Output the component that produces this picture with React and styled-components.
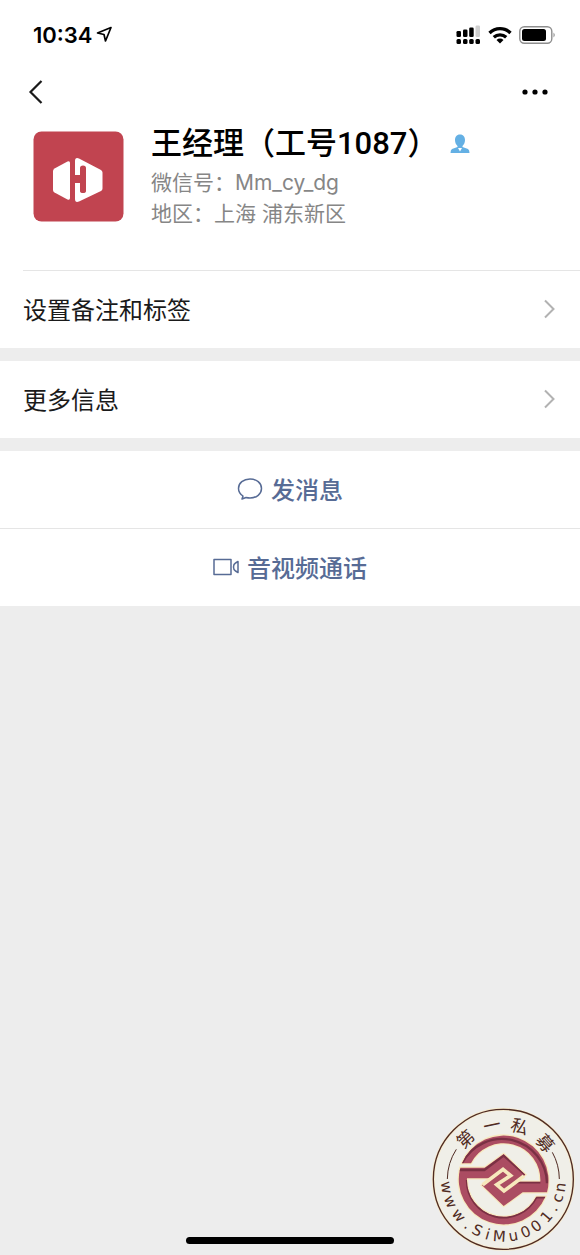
import React from 'react';
import styled, { createGlobalStyle } from 'styled-components';

const GlobalStyle = createGlobalStyle`
  * {
    box-sizing: border-box;
  }
  body {
    margin: 0;
    background: #ededed;
    font-family: Inter, "Noto Sans CJK SC", sans-serif;
    color: #1a1a1a;
  }
  button {
    font-family: inherit;
    border: 0;
    padding: 0;
    background: none;
    color: inherit;
    cursor: pointer;
  }
  svg {
    display: block;
    flex: none;
  }
`;

const Screen = styled.div`
  position: relative;
  min-height: 100vh;
  display: flex;
  flex-direction: column;
`;

const Top = styled.header`
  background: #fff;
`;

const StatusBar = styled.div`
  display: flex;
  align-items: center;
  justify-content: space-between;
  height: 69px;
  padding: 0 24px 0 33px;
`;

const Clock = styled.div`
  display: flex;
  align-items: center;
  gap: 4px;
  font-size: 22px;
  font-weight: 600;
  color: #000;
`;

const Indicators = styled.div`
  display: flex;
  align-items: center;
  gap: 7px;
`;

const NavBar = styled.nav`
  display: flex;
  align-items: center;
  justify-content: space-between;
  height: 46px;
  padding: 0 32px 0 24px;
`;

const Profile = styled.section`
  display: flex;
  gap: 27px;
  height: 155px;
  padding: 9px 32px 0;
`;

const Avatar = styled.svg`
  margin-top: 6px;
`;

const Details = styled.div`
  flex: 1;
`;

const NameLine = styled.div`
  display: flex;
  align-items: center;
  gap: 12px;
  margin-bottom: 4px;
`;

const Name = styled.h1`
  margin: 0;
  font-family: Roboto, "Noto Sans CJK SC", sans-serif;
  font-size: 31px;
  line-height: 39px;
  font-weight: 500;
  color: #000;
`;

const Meta = styled.p`
  margin: 0;
  font-size: 21px;
  line-height: 31px;
  color: #868686;
`;

const Group = styled.div`
  background: #fff;
  margin-bottom: 13px;
`;

const Row = styled.button`
  display: flex;
  align-items: center;
  justify-content: space-between;
  width: 100%;
  height: 77px;
  padding: 0 24px 2px 23px;
  font-size: 24px;
  text-align: left;
`;

const Divider = styled.hr`
  height: 1px;
  margin: 0 0 0 ${(props) => props.$inset || 0}px;
  border: 0;
  background: #e5e5e5;
`;

const Action = styled.button`
  display: flex;
  align-items: center;
  justify-content: center;
  gap: 8px;
  width: 100%;
  height: 77px;
  padding-bottom: 2px;
  font-size: 24px;
  font-weight: 500;
  color: #576b95;
`;

const HomeBar = styled.div`
  width: 208px;
  height: 7px;
  margin: auto auto 11px;
  border-radius: 4px;
  background: #000;
`;

const Stamp = styled.svg`
  position: absolute;
  right: 0;
  bottom: 0;
`;

const Chevron = () => (
  <svg width="13" height="20" viewBox="0 0 13 20" fill="none" stroke="#b2b2b2" strokeWidth="2">
    <path d="M2 1.5 L10.5 10 L2 18.5" />
  </svg>
);

const urlChars = [
  ['w', 82], ['w', 67], ['w', 51], ['.', 38], ['S', 27], ['i', 16], ['M', 4],
  ['u', -10], ['0', -23], ['0', -35], ['1', -49], ['.', -60], ['c', -71], ['n', -82],
];

const titleChars = [['第', -43], ['一', -12], ['私', 17], ['募', 49]];

// one half of the emblem, the other half is the same shape turned by 180deg
const half = 'M111 190 A135 135 0 0 1 366 277 H293 L236 318 L171 256 L234 208 L255 226 L216 254 L237 272 L273 245 H346 A110 110 0 0 0 138 190 Z';

const EmblemHalf = () => (
  <>
    <path d={half} fill="#ab4c62" stroke="#f7e8bd" strokeWidth="7" />
    <path d={half} fill="#ab4c62" />
  </>
);

function SiteStamp() {
  return (
    <Stamp width="155" height="155" viewBox="0 0 465 465" role="img" aria-label="第一私募 www.SiMu001.cn">
      <defs>
        <clipPath id="emblem">
          <path d={half} />
          <path d={half} transform="rotate(180 236 240)" />
        </clipPath>
      </defs>
      <circle cx="235" cy="238" r="210" fill="#f0efe8" stroke="#f7ecd0" strokeWidth="9" />
      <circle cx="235" cy="238" r="210" fill="none" stroke="#4f2a22" strokeWidth="4" />
      <g fill="none" stroke="#4f2a22" strokeWidth="3">
        <path d="M67 237 A168 168 0 0 1 94 148" />
        <path d="M403 237 A168 168 0 0 0 382 157" />
      </g>
      <EmblemHalf />
      <g transform="rotate(180 236 240)">
        <EmblemHalf />
      </g>
      <g clipPath="url(#emblem)" fill="none" stroke="#7a3043" strokeWidth="7">
        <path d="M111 190 A135 135 0 0 1 366 250" />
        <path d="M102 210 H178 L236 167 L300 224" />
        <path d="M126 240 A110 110 0 0 0 334 292" />
        <path d="M273 247 H346" />
        <path d="M334 292 H366" />
      </g>
      <path d="M173 254 L234 208 L257 227 L215 254 L237 273 L297 228" fill="none" stroke="#f7e8bd" strokeWidth="11" />
      <g fill="#4f2a22" textAnchor="middle" fontFamily='"Noto Sans CJK SC", sans-serif' fontSize="52">
        {titleChars.map(([char, angle]) => (
          <text key={char} y="-147" transform={`translate(235 238) rotate(${angle})`}>{char}</text>
        ))}
      </g>
      <g fill="#4f2a22" textAnchor="middle" fontFamily='"DejaVu Sans", sans-serif' fontSize="45">
        {urlChars.map(([char, angle]) => (
          <text key={angle} y="187" transform={`translate(235 238) rotate(${angle})`}>{char}</text>
        ))}
      </g>
    </Stamp>
  );
}

export default function App() {
  return (
    <Screen>
      <GlobalStyle />
      <Top>
        <StatusBar>
          <Clock>
            10:34
            <svg width="17" height="17" viewBox="0 0 17 17" fill="none" stroke="#000" strokeWidth="1.7" strokeLinejoin="round">
              <path d="M15 1.5 L1.5 7 L8 8.5 L9.5 15 Z" />
            </svg>
          </Clock>
          <Indicators>
            <svg width="25" height="20" viewBox="0 0 25 20">
              <rect x="0.5" y="6" width="4.5" height="6" rx="1.3" />
              <rect x="7" y="4.5" width="4.5" height="7.5" rx="1.3" />
              <rect x="13.2" y="2.5" width="4.5" height="9.5" rx="1.3" />
              <rect x="19.5" y="0.5" width="4.5" height="11.5" rx="1.3" fill="#d0d0d0" />
              <rect x="0.5" y="14" width="4.5" height="5" rx="1.5" />
              <rect x="7" y="14" width="4.5" height="5" rx="1.5" />
              <rect x="13.2" y="14" width="4.5" height="5" rx="1.5" />
              <rect x="19.5" y="14" width="4.5" height="5" rx="1.5" />
            </svg>
            <svg width="24" height="18" viewBox="0 0 24 18" fill="none" stroke="#000" strokeWidth="3.3">
              <path d="M1.5 7 A15 15 0 0 1 22.5 7" />
              <path d="M5.8 11.3 A9 9 0 0 1 18.2 11.3" />
              <path d="M12 17.5 L8.5 14 A5 5 0 0 1 15.5 14 Z" fill="#000" stroke="none" />
            </svg>
            <svg width="37" height="18" viewBox="0 0 37 18">
              <rect x="0.8" y="0.8" width="32" height="16.4" rx="4.5" fill="none" stroke="#8e8e8e" strokeWidth="1.4" />
              <rect x="3" y="3" width="24" height="12" rx="2.5" />
              <path d="M34.5 6.5 Q37 9 34.5 11.5 Z" fill="#8e8e8e" />
            </svg>
          </Indicators>
        </StatusBar>
        <NavBar>
          <button aria-label="返回">
            <svg width="24" height="26" viewBox="0 0 24 26" fill="none" stroke="#1a1a1a" strokeWidth="2.2">
              <path d="M17.5 2 L6.5 13 L17.5 24" />
            </svg>
          </button>
          <button aria-label="更多">
            <svg width="30" height="8" viewBox="0 0 30 8">
              <circle cx="7" cy="4" r="2.6" />
              <circle cx="17" cy="4" r="2.6" />
              <circle cx="27" cy="4" r="2.6" />
            </svg>
          </button>
        </NavBar>
        <Profile>
          <Avatar width="92" height="92" viewBox="0 0 92 92">
            <rect x="1.5" y="1.5" width="90" height="90" rx="8" fill="#c14450" />
            <g fill="#fff">
              <path d="M38 33 Q38 30.5 35.5 31.5 L22.5 38.5 Q21 39.5 21 41 V60 Q21 61.5 22.5 62.5 L35.5 69.5 Q38 70.5 38 68 Z" />
              <path d="M43 31 Q43 27 47 28.5 L69 40 Q70.5 41 70.5 42.5 V58.5 Q70.5 60 69 61 L47 71.5 Q43 73 43 69 V53 H48 V61 Q48 63 51 63 Q54 63 54 61 V38 Q54 35.5 51 35.5 Q48 35.5 48 38 V45 H43 Z" />
            </g>
          </Avatar>
          <Details>
            <NameLine>
              <Name>王经理（工号1087）</Name>
              <svg width="20" height="20" viewBox="0 0 20 20" fill="#64b0e4">
                <path d="M10 0.5 C13.5 0.5 15 3 15 6 C15 8.5 14 10.5 12.5 12 V13 L18 15 Q19.5 16 19.5 19 H0.5 Q0.5 16 2 15 L7.5 13 V12 C6 10.5 5 8.5 5 6 C5 3 6.5 0.5 10 0.5 Z" />
                <path d="M8 14 H12 L10 17.5 Z" fill="#fff" />
              </svg>
            </NameLine>
            <Meta>微信号：Mm_cy_dg</Meta>
            <Meta>地区：上海 浦东新区</Meta>
          </Details>
        </Profile>
        <Divider $inset={23} />
      </Top>
      <Group>
        <Row>设置备注和标签<Chevron /></Row>
      </Group>
      <Group>
        <Row>更多信息<Chevron /></Row>
      </Group>
      <Group>
        <Action>
          <svg width="26" height="24" viewBox="0 0 26 24" fill="none" stroke="#576b95" strokeWidth="1.5" strokeLinejoin="round">
            <path d="M6 19 C3 17 1.5 14.5 1.5 11.5 C1.5 6 6.5 2 13 2 C19.5 2 24.5 6 24.5 11.5 C24.5 17 19.5 21 13 21 C11.5 21 10.3 20.8 9 20.5 L5 22 Z" />
          </svg>
          发消息
        </Action>
        <Divider />
        <Action>
          <svg width="26" height="18" viewBox="0 0 26 18" fill="none" stroke="#576b95" strokeWidth="1.5" strokeLinejoin="round">
            <rect x="1" y="1.5" width="17" height="15" />
            <path d="M25 3.5 L22.5 5 Q20.5 6 20.5 9 Q20.5 12 22.5 13 L25 14.5 Z" />
          </svg>
          音视频通话
        </Action>
      </Group>
      <HomeBar />
      <SiteStamp />
    </Screen>
  );
}
